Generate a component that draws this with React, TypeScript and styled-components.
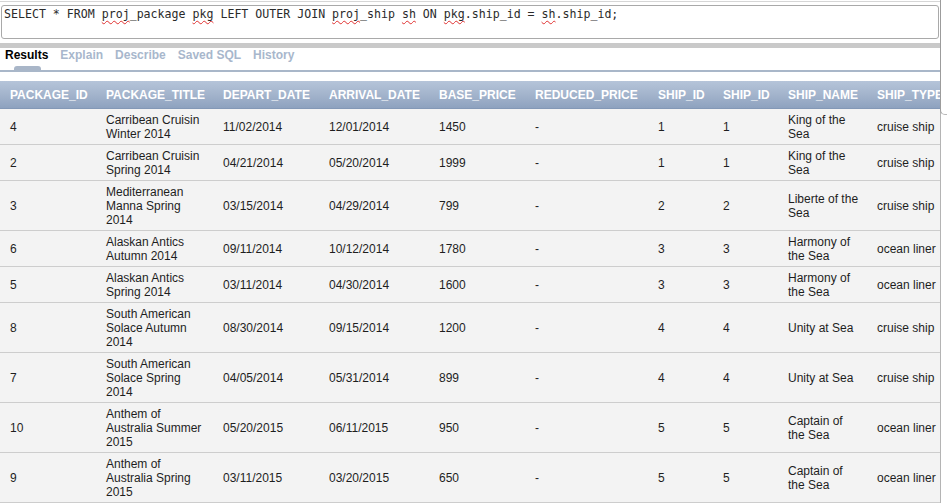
import React from "react";
import styled, { createGlobalStyle } from "styled-components";

const GlobalStyle = createGlobalStyle`
  html, body { margin: 0; padding: 0; background: #ffffff; overflow: hidden; }
  body { font-family: "Liberation Sans", Arial, sans-serif; font-size: 12px; color: #1a1a1a; }
`;

const Page = styled.div`
  display: flex;
  width: 947px;
  height: 503px;
  overflow: hidden;
`;

const Main = styled.div`
  width: 940px;
  display: flex;
  flex-direction: column;
  overflow: hidden;
`;

const TopEdge = styled.div`
  margin-top: 1px;
  height: 1px;
  background: #d6d6d6;
`;

const Editor = styled.div`
  margin: 3px 1px 0 1px;
  height: 34px;
  box-sizing: border-box;
  border: 1px solid #a9a9a9;
  border-radius: 3px;
  padding: 1px 2px;
  font-family: "DejaVu Sans Mono", "Liberation Mono", monospace;
  font-size: 11.6px;
  line-height: 14px;
  color: #2a2a2a;
  white-space: pre;
`;

const Misspelled = styled.span`
  text-decoration: underline wavy #e03030;
  text-decoration-thickness: 1px;
  text-underline-offset: 2px;
`;

const Splitter = styled.div`
  margin-top: 4px;
  height: 5px;
  background: #c9c9c9;
`;

const TabBar = styled.div`
  display: flex;
  gap: 12px;
  padding-left: 5px;
  height: 24px;
  box-sizing: border-box;
  border-bottom: 2px solid #a9b7c9;
`;

const Tab = styled.div<{ $active?: boolean }>`
  position: relative;
  font-weight: bold;
  font-size: 12px;
  line-height: 14px;
  color: ${(p) => (p.$active ? "#000000" : "#a8b7cc")};
  &::after {
    content: "";
    display: ${(p) => (p.$active ? "block" : "none")};
    position: absolute;
    left: 9px;
    bottom: 0;
    width: 27px;
    height: 4px;
    border-radius: 3px 3px 0 0;
    background: #a9b6c8;
  }
`;

const TableWrap = styled.div`
  margin-top: 9px;
  overflow: hidden;
`;

const Table = styled.table`
  table-layout: fixed;
  width: 957px;
  border-collapse: collapse;
  border-spacing: 0;
`;

const HeadCell = styled.th`
  height: 27px;
  padding: 0 8px 0 10px;
  text-align: left;
  font-weight: bold;
  font-size: 12px;
  line-height: 14px;
  color: #ffffff;
  white-space: nowrap;
  overflow: visible;
  background: linear-gradient(#b5c4d9 0%, #a3b4cc 50%, #8ea2bf 100%);
  border-bottom: 1px solid #8398b6;
`;

const Row = styled.tr`
  background: #f3f3f3;
  border-bottom: 1px solid #cdcdcd;
`;

const Cell = styled.td`
  padding: 4px 8px 3px 10px;
  font-size: 12px;
  line-height: 14px;
  color: #1e1e1e;
  vertical-align: middle;
  overflow: hidden;
`;

const ScrollStrip = styled.div`
  width: 7px;
  box-sizing: border-box;
  border-left: 1px solid #b4b4b4;
  background: #ffffff;
`;

const Thumb = styled.div`
  height: 115px;
  margin-left: -1px;
  box-sizing: border-box;
  border-left: 1px solid #9c9c9c;
  border-bottom: 1px solid #b8b8b8;
  border-bottom-left-radius: 5px;
  background: #ffffff;
`;

const widths = [96, 117, 106, 110, 96, 123, 65, 65, 89, 90];
const headers = [
  "PACKAGE_ID",
  "PACKAGE_TITLE",
  "DEPART_DATE",
  "ARRIVAL_DATE",
  "BASE_PRICE",
  "REDUCED_PRICE",
  "SHIP_ID",
  "SHIP_ID",
  "SHIP_NAME",
  "SHIP_TYPE",
];

const rows: string[][] = [
  ["4", "Carribean Cruisin Winter 2014", "11/02/2014", "12/01/2014", "1450", "-", "1", "1", "King of the Sea", "cruise ship"],
  ["2", "Carribean Cruisin Spring 2014", "04/21/2014", "05/20/2014", "1999", "-", "1", "1", "King of the Sea", "cruise ship"],
  ["3", "Mediterranean Manna Spring 2014", "03/15/2014", "04/29/2014", "799", "-", "2", "2", "Liberte of the Sea", "cruise ship"],
  ["6", "Alaskan Antics Autumn 2014", "09/11/2014", "10/12/2014", "1780", "-", "3", "3", "Harmony of the Sea", "ocean liner"],
  ["5", "Alaskan Antics Spring 2014", "03/11/2014", "04/30/2014", "1600", "-", "3", "3", "Harmony of the Sea", "ocean liner"],
  ["8", "South American Solace Autumn 2014", "08/30/2014", "09/15/2014", "1200", "-", "4", "4", "Unity at Sea", "cruise ship"],
  ["7", "South American Solace Spring 2014", "04/05/2014", "05/31/2014", "899", "-", "4", "4", "Unity at Sea", "cruise ship"],
  ["10", "Anthem of Australia Summer 2015", "05/20/2015", "06/11/2015", "950", "-", "5", "5", "Captain of the Sea", "ocean liner"],
  ["9", "Anthem of Australia Spring 2015", "03/11/2015", "03/20/2015", "650", "-", "5", "5", "Captain of the Sea", "ocean liner"],
];

const tabs = ["Results", "Explain", "Describe", "Saved SQL", "History"];

export default function App() {
  return (
    <>
      <GlobalStyle />
      <Page>
        <Main>
          <TopEdge />
          <Editor>
            SELECT * FROM <Misspelled>proj</Misspelled>_package <Misspelled>pkg</Misspelled> LEFT OUTER JOIN{" "}
            <Misspelled>proj</Misspelled>_ship <Misspelled>sh</Misspelled> ON <Misspelled>pkg</Misspelled>.ship_id ={" "}
            <Misspelled>sh</Misspelled>.ship_id;
          </Editor>
          <Splitter />
          <TabBar>
            {tabs.map((t, i) => (
              <Tab key={t} $active={i === 0}>
                {t}
              </Tab>
            ))}
          </TabBar>
          <TableWrap>
            <Table>
              <colgroup>
                {widths.map((w, i) => (
                  <col key={i} style={{ width: w }} />
                ))}
              </colgroup>
              <thead>
                <tr>
                  {headers.map((h, i) => (
                    <HeadCell key={i}>{h}</HeadCell>
                  ))}
                </tr>
              </thead>
              <tbody>
                {rows.map((r, ri) => (
                  <Row key={ri}>
                    {r.map((c, ci) => (
                      <Cell key={ci}>{c}</Cell>
                    ))}
                  </Row>
                ))}
              </tbody>
            </Table>
          </TableWrap>
        </Main>
        <ScrollStrip>
          <Thumb />
        </ScrollStrip>
      </Page>
    </>
  );
}
